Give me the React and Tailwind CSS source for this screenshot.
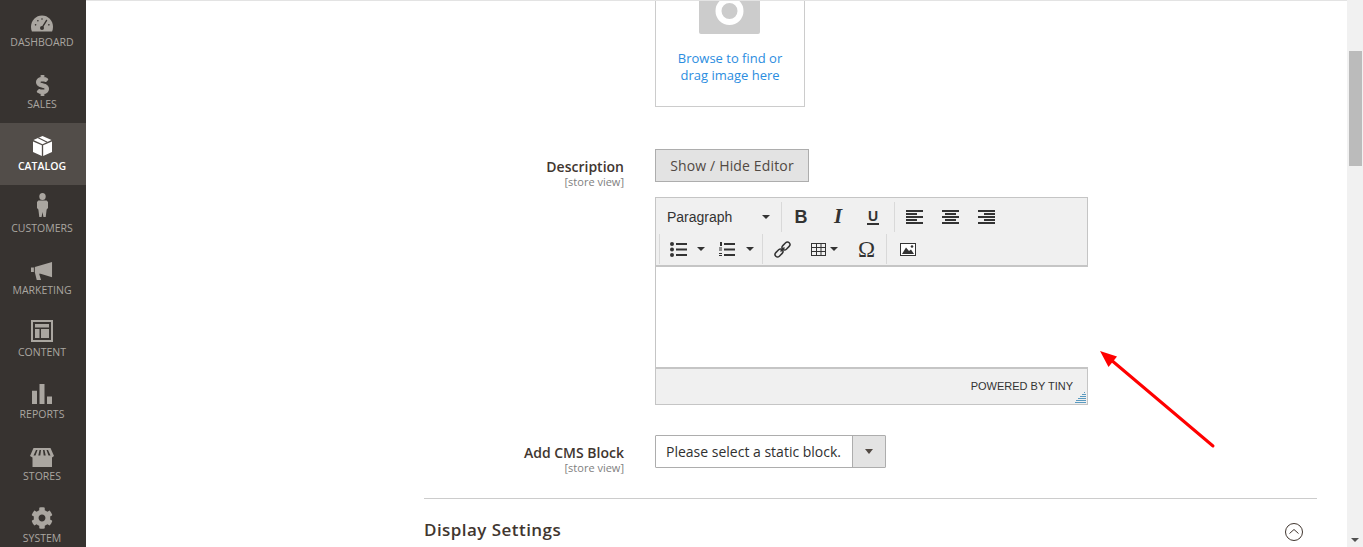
import React from "react";
import { FaDollarSign, FaCog } from "react-icons/fa";

const Gauge = () => (
  <svg width="22" height="17" viewBox="0 0 24 19" preserveAspectRatio="none"><path fill="currentColor" fillRule="evenodd" d="M1 18.500 C.3 16.500 0 15 0 13 C0 6 5.500 .5 12 .5 S24 6 24 13 C24 15 23.700 16.500 23 18.500 Z" /><path stroke="#373330" strokeWidth="1.500" strokeLinecap="round" d="M17 6 L12.800 13" /><circle cx="12" cy="14.500" r="2.200" fill="#373330" /><circle cx="5" cy="11" r=".9" fill="#373330" /><circle cx="7.500" cy="6.500" r=".9" fill="#373330" /><circle cx="12" cy="4.500" r=".9" fill="#373330" /><circle cx="19.500" cy="11" r=".9" fill="#373330" /></svg>
);
const BoxIcon = () => (
  <svg width="19" height="20" viewBox="0 0 20 22" preserveAspectRatio="none"><path fill="currentColor" d="M10 0 L19.500 4.500 L10 9 L.5 4.500 Z M0 6 L9.300 10.300 V22 L0 17.500 Z M20 6 V17.500 L10.700 22 V10.300 Z" /><path stroke="#524d49" strokeWidth="1.200" d="M5.500 2 L15 6.800" /></svg>
);
const Person = () => (
  <svg width="11" height="24" viewBox="0 0 12 24" preserveAspectRatio="none"><circle cx="6" cy="3.500" r="3.500" fill="currentColor" /><path fill="currentColor" d="M1.500 7.500 H10.500 L12 9 V15 L10.500 16.500 L9.500 24 H7 L6 19 L5 24 H2.500 L1.500 16.500 L0 15 V9 Z" /></svg>
);
const Mega = () => (
  <svg width="22" height="18" viewBox="0 0 23 20" preserveAspectRatio="none"><path fill="currentColor" d="M22 0 V17 L10 13 H8.500 L10.500 20 H6 L4 11.500 V5.500 Z M0 6 H3 V11 H0 Z" /></svg>
);
const ContentIcon = () => (
  <svg width="22" height="22" viewBox="0 0 22 22"><path fill="currentColor" fillRule="evenodd" d="M0 0 H22 V22 H0 Z M2 2 V20 H20 V2 Z M4 4 H18 V7.500 H4 Z M4 9 H8.500 V18 H4 Z M10 9 H18 V18 H10 Z" /></svg>
);
const Bars = () => (
  <svg width="20" height="20" viewBox="0 0 20 21" preserveAspectRatio="none"><path fill="currentColor" d="M0 7 H5 V21 H0 Z M7.500 0 H12.500 V21 H7.500 Z M15 13 H20 V21 H15 Z" /></svg>
);
const Store = () => (
  <svg width="24" height="19" viewBox="0 0 24 20" preserveAspectRatio="none"><path fill="currentColor" fillRule="evenodd" d="M3.500 0 H20.500 L24 8.500 L22 10 V20 H2.500 V10 L0 8.500 Z M6 2 L3.500 8 H5.500 L7.500 2 Z M9.500 2 L8.300 8 H10.300 L11 2 Z M13 2 L13.700 8 H15.700 L14.500 2 Z M16.500 2 L18.500 8 H20.500 L18 2 Z" /></svg>
);

const navItems = [
  { label: "DASHBOARD", icon: <Gauge />, pad: "pt-[16px]" },
  { label: "SALES", icon: <FaDollarSign size={21} className="stroke-current stroke-[28]" />, pad: "pt-[14px]" },
  { label: "CATALOG", icon: <BoxIcon />, active: true, pad: "pt-[13px]" },
  { label: "CUSTOMERS", icon: <Person />, pad: "pt-[8px]" },
  { label: "MARKETING", icon: <Mega />, pad: "pt-[15px]" },
  { label: "CONTENT", icon: <ContentIcon />, pad: "pt-[11px]" },
  { label: "REPORTS", icon: <Bars />, pad: "pt-[13px]" },
  { label: "STORES", icon: <Store />, pad: "pt-[15px]" },
  { label: "SYSTEM", icon: <FaCog size={22} />, pad: "pt-[12px]" },
];

const Caret = () => <span className="block w-0 h-0 border-x-[4px] border-x-transparent border-t-[4px] border-t-[#333]" />;
const Sep = () => <span className="block w-px h-[30px] bg-[#d9d9d9] shrink-0" />;

const Align = ({ kind }) => {
  const x = { left: 0, center: 3, right: 6 }[kind];
  return (
    <svg width="17" height="14" viewBox="0 0 17 14" fill="#333">
      <rect x="0" y="0" width="17" height="2" />
      <rect x={x} y="3" width="11" height="2" />
      <rect x="0" y="6" width="17" height="2" />
      <rect x={x} y="9" width="11" height="2" />
      <rect x="0" y="12" width="17" height="2" />
    </svg>
  );
};

const ListIcon = () => (
  <svg width="17" height="15" viewBox="0 0 17 15" fill="#333"><circle cx="2" cy="2" r="2" /><circle cx="2" cy="7.500" r="2" /><circle cx="2" cy="13" r="2" /><rect x="6" y="1" width="11" height="2" /><rect x="6" y="6.500" width="11" height="2" /><rect x="6" y="12" width="11" height="2" /></svg>
);
const NumList = () => (
  <svg width="16" height="15" viewBox="0 0 16 15" fill="#333"><rect x="1" y="0" width="2" height="4" /><rect x="0" y="5.500" width="3" height="1" /><rect x="0" y="7.500" width="3" height="1" /><rect x="0" y="11" width="3" height="1" /><rect x="0" y="13" width="3" height="1" /><rect x="5" y="1" width="11" height="2" /><rect x="5" y="6.500" width="11" height="2" /><rect x="5" y="12" width="11" height="2" /></svg>
);
const LinkIcon = () => (
  <svg width="17" height="17" viewBox="0 0 17 17" fill="none" stroke="#333" strokeWidth="1.500"><rect x="9.500" y="0.500" width="5" height="9" rx="2.500" transform="rotate(45 12 5)" /><rect x="2.500" y="7.500" width="5" height="9" rx="2.500" transform="rotate(45 5 12)" /><path d="M6.500 10.500 L10.500 6.500" /></svg>
);
const TableIcon = () => (
  <svg width="15" height="13" viewBox="0 0 15 13" fill="none" stroke="#333"><rect x=".5" y=".5" width="14" height="12" /><path d="M.5 4.500 H14.500 M.5 8.500 H14.500 M5.500 .5 V12.500 M10 .5 V12.500" /></svg>
);
const ImageIcon = () => (
  <svg width="16" height="13" viewBox="0 0 16 13"><rect x=".5" y=".5" width="15" height="12" fill="#fff" stroke="#333" /><path fill="#333" d="M2 11 L6 4.500 L9 8 L11 6.500 L14 11 Z" /><circle cx="12" cy="3.500" r="1.300" fill="#333" /></svg>
);

const Btn = ({ w, children, className = "justify-center" }) => (
  <span style={{ width: w }} className={"flex items-center shrink-0 text-[#333] " + className}>{children}</span>
);

const Label = ({ title }) => (
  <div className="w-[200px] text-right pt-[9px] shrink-0">
    <div className="text-[14px] leading-[18px] font-semibold text-[#41362f]">{title}</div>
    <div className="text-[11px] leading-[12px] text-[#808080]">[store view]</div>
  </div>
);

export default function App() {
  return (
    <div className="relative flex h-[547px] w-[1363px] overflow-hidden bg-white font-['Open_Sans',sans-serif]">
      <nav className="w-[86px] shrink-0 bg-[#373330] -mt-px">
        {navItems.map((n) => (
          <div key={n.label} className={"h-[62px] pr-[2px] flex flex-col items-center " + (n.active ? "bg-[#524d49] text-white" : "text-[#aaa6a0]")}>
            <div className={"h-[36px] " + n.pad}>{n.icon}</div>
            <div className={"text-[10.500px] leading-[14px] " + (n.active ? "font-semibold" : "")}>{n.label}</div>
          </div>
        ))}
      </nav>

      <main className="flex-1 border-t border-[#e3e3e3] h-full overflow-hidden">
        <div className="ml-[338px] w-[893px]">
          <div className="ml-[231px] w-[150px] h-[106px] border-x border-b border-[#cccccc] text-center">
            <svg className="ml-[43px] block" width="61" height="33" viewBox="0 0 61 33">
              <path fill="#cccccc" d="M0 0 H61 V31 a2 2 0 0 1 -2 2 H2 a2 2 0 0 1 -2 -2 Z" />
              <circle cx="30.500" cy="10" r="11" fill="none" stroke="#fff" strokeWidth="6" />
            </svg>
            <div className="mt-[16px] text-[13px] leading-[17px] text-[#2b8de0]">Browse to find or<br />drag image here</div>
          </div>

          <div className="flex gap-[31px] mt-[42px]">
            <Label title="Description" />
            <div>
              <button className="block h-[33px] w-[154px] border border-[#adadad] bg-[#e3e3e3] text-[14px] font-medium tracking-[.15px] text-[#514943]">Show / Hide Editor</button>
              <div className="mt-[15px] w-[433px] h-[208px] flex flex-col">
                <div className="h-[70px] bg-[#f0f0f0] border border-[#c5c5c5] border-b-2 text-[14px]">
                  <div className="flex h-[38px] items-center font-['Liberation_Sans',sans-serif]">
                    <div className="w-[125px] flex items-center justify-between pl-[11px] pr-[11px] text-[14px] text-[#333]"><span>Paragraph</span><Caret /></div>
                    <Sep />
                    <Btn w={38}><span className="font-bold text-[18px]">B</span></Btn>
                    <Btn w={36}><span className="font-['Liberation_Serif',serif] italic font-bold text-[21px]">I</span></Btn>
                    <Btn w={38} className="justify-center pr-[4px]"><span className="font-semibold text-[14px] leading-[14px] border-b-2 border-[#333] px-[1px]">U</span></Btn>
                    <Sep />
                    <Btn w={38}><Align kind="left" /></Btn>
                    <Btn w={35}><Align kind="center" /></Btn>
                    <Btn w={37}><Align kind="right" /></Btn>
                  </div>
                  <div className="flex h-[26px] items-center pl-[3px]">
                    <Sep />
                    <Btn w={52} className="pl-[10px] gap-[10px]"><ListIcon /><Caret /></Btn>
                    <Btn w={50} className="pl-[7px] gap-[11px]"><NumList /><Caret /></Btn>
                    <Sep />
                    <Btn w={39}><LinkIcon /></Btn>
                    <Btn w={45} className="pl-[9px] gap-[4px]"><TableIcon /><Caret /></Btn>
                    <Btn w={39}><span className="font-['Liberation_Serif',serif] text-[23px] leading-none">Ω</span></Btn>
                    <Sep />
                    <Btn w={41}><ImageIcon /></Btn>
                  </div>
                </div>
                <div className="h-[100px] shrink-0 bg-white border-l border-[#c5c5c5]" />
                <div className="relative flex-1 bg-[#f0f0f0] border border-t-2 border-[#c5c5c5] flex items-center justify-end pr-[14px] font-['Liberation_Sans',sans-serif] text-[11px] text-[#333]">
                  POWERED BY TINY
                  <svg className="absolute right-[1px] bottom-[1px]" width="11" height="11" viewBox="0 0 11 11" fill="#5a9ac0">
                    <path d="M9 0h1v1H9zM7 2h4v1H7zM5 4h6v1H5zM3 6h8v1H3zM1 8h10v1H1zM0 10h11v1H0z" />
                  </svg>
                </div>
              </div>
            </div>
          </div>

          <div className="flex gap-[31px] mt-[30px] h-[33px]">
            <Label title="Add CMS Block" />
            <div className="flex h-[33px] w-[231px] border border-[#adadad] rounded-[1px]">
              <div className="flex-1 flex items-center pl-[10px] text-[14px] text-[#303030]">Please select a static block.</div>
              <div className="w-[33px] border-l border-[#adadad] bg-[#e3e3e3] flex items-center justify-center">
                <span className="block w-0 h-0 border-x-[4px] border-x-transparent border-t-[5px] border-t-[#514943]" />
              </div>
            </div>
          </div>

          <div className="mt-[30px] border-t border-[#cccccc] flex items-center justify-between pt-[19px] pr-[13px]">
            <span className="text-[17px] leading-[24px] font-semibold tracking-[.45px] text-[#41362f]">Display Settings</span>
            <svg width="20" height="20" viewBox="0 0 20 20" fill="none" stroke="#41362f" className="mt-[3px]"><circle cx="10" cy="10" r="8.500" /><path d="M5.500 11.500 L10 7.500 L14.500 11.500" /></svg>
          </div>
        </div>
      </main>

      <div className="relative w-[16px] shrink-0 bg-[#f1f1f1] flex flex-col items-end justify-end">
        <div className="absolute left-[2px] top-[51px] w-[13px] h-[115px] bg-[#bbbbbb]" />
        <span className="mr-[4px] mb-[5px] block w-0 h-0 border-x-[4px] border-x-transparent border-t-[4px] border-t-[#505050]" />
      </div>

      <svg className="absolute left-0 top-0 pointer-events-none" width="1363" height="547" viewBox="0 0 1363 547">
        <path d="M1213 446 L1110 359" stroke="#ff0000" strokeWidth="3" strokeLinecap="round" fill="none" />
        <path d="M1100 351 L1117 356.500 L1108.500 367 Z" fill="#ff0000" />
      </svg>
    </div>
  );
}
